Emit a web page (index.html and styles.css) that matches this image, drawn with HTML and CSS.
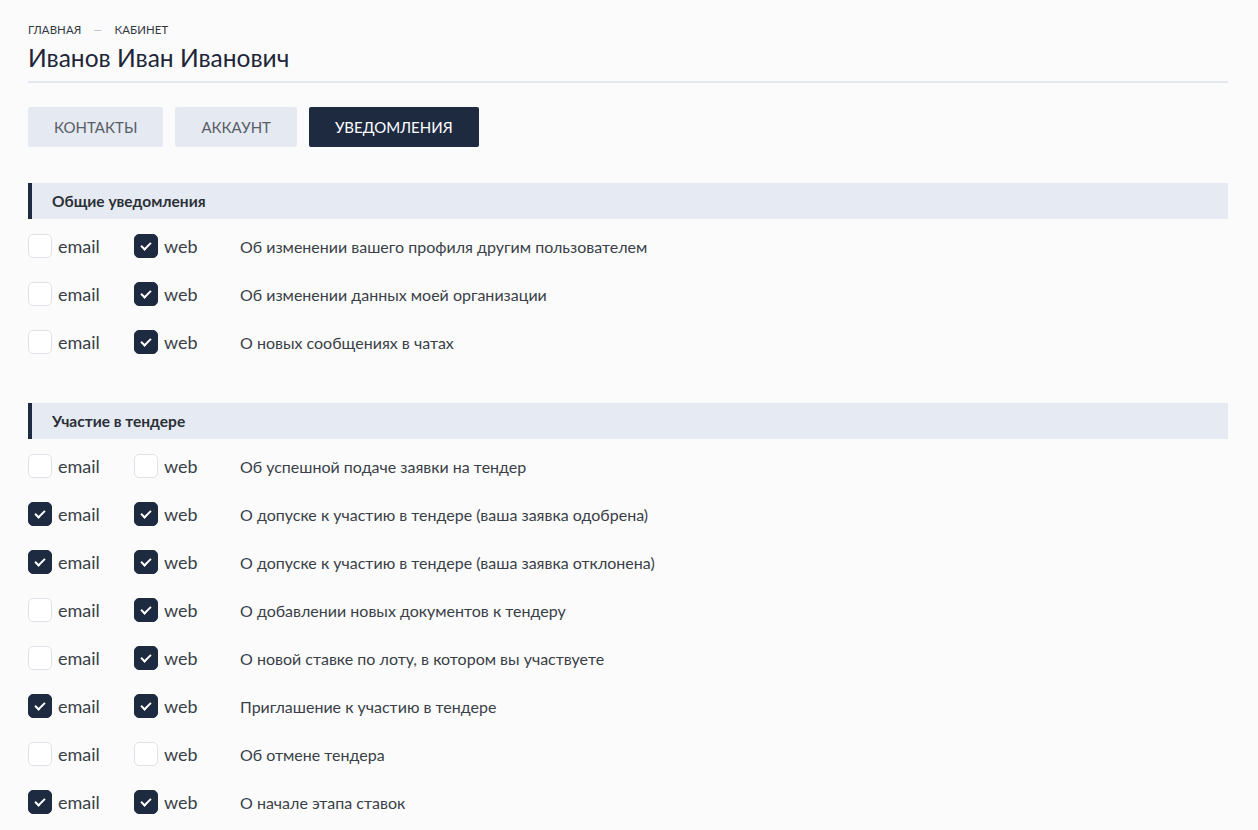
FILE: index.html
```html
<!DOCTYPE html>
<html lang="ru">
<head>
<meta charset="utf-8">
<link rel="stylesheet" href="styles.css">
</head>
<body>
<div class="page">
  <div class="crumbs"><span>Главная</span><span class="dash">—</span><span>Кабинет</span></div>
  <h1 class="title">Иванов Иван Иванович</h1>
  <div class="tabs">
    <div class="tab">Контакты</div>
    <div class="tab">Аккаунт</div>
    <div class="tab active">Уведомления</div>
  </div>

  <section class="group">
    <div class="group-head">Общие уведомления</div>
    <div class="row"><label class="opt"><span class="cb"></span>email</label><label class="opt"><span class="cb on"></span>web</label><span class="desc">Об изменении вашего профиля другим пользователем</span></div>
    <div class="row"><label class="opt"><span class="cb"></span>email</label><label class="opt"><span class="cb on"></span>web</label><span class="desc">Об изменении данных моей организации</span></div>
    <div class="row"><label class="opt"><span class="cb"></span>email</label><label class="opt"><span class="cb on"></span>web</label><span class="desc">О новых сообщениях в чатах</span></div>
  </section>

  <section class="group">
    <div class="group-head">Участие в тендере</div>
    <div class="row"><label class="opt"><span class="cb"></span>email</label><label class="opt"><span class="cb"></span>web</label><span class="desc">Об успешной подаче заявки на тендер</span></div>
    <div class="row"><label class="opt"><span class="cb on"></span>email</label><label class="opt"><span class="cb on"></span>web</label><span class="desc">О допуске к участию в тендере (ваша заявка одобрена)</span></div>
    <div class="row"><label class="opt"><span class="cb on"></span>email</label><label class="opt"><span class="cb on"></span>web</label><span class="desc">О допуске к участию в тендере (ваша заявка отклонена)</span></div>
    <div class="row"><label class="opt"><span class="cb"></span>email</label><label class="opt"><span class="cb on"></span>web</label><span class="desc">О добавлении новых документов к тендеру</span></div>
    <div class="row"><label class="opt"><span class="cb"></span>email</label><label class="opt"><span class="cb on"></span>web</label><span class="desc">О новой ставке по лоту, в котором вы участвуете</span></div>
    <div class="row"><label class="opt"><span class="cb on"></span>email</label><label class="opt"><span class="cb on"></span>web</label><span class="desc">Приглашение к участию в тендере</span></div>
    <div class="row"><label class="opt"><span class="cb"></span>email</label><label class="opt"><span class="cb"></span>web</label><span class="desc">Об отмене тендера</span></div>
    <div class="row"><label class="opt"><span class="cb on"></span>email</label><label class="opt"><span class="cb on"></span>web</label><span class="desc">О начале этапа ставок</span></div>
  </section>
</div>
</body>
</html>
```
FILE: styles.css
```css
html, body {
  margin: 0;
  padding: 0;
  background: #fbfbfc;
}
body {
  font-family: "Lato", "Open Sans", sans-serif;
  color: #2b2f36;
  overflow: hidden;
}
.page {
  width: 1200px;
  padding: 22px 28px 0 28px;
}
.crumbs {
  display: flex;
  gap: 12px;
  font-size: 11.4px;
  text-transform: uppercase;
  color: #333840;
  line-height: 16px;
  letter-spacing: 0.1px;
}
.crumbs .dash {
  color: #b7bcc6;
}
.title {
  margin: 5px 0 0 0;
  font-size: 24.5px;
  font-weight: 400;
  line-height: 30px;
  color: #1d2638;
  padding-bottom: 8px;
  border-bottom: 2px solid #e4e8f0;
}
.tabs {
  display: flex;
  gap: 12px;
  margin-top: 24px;
}
.tab {
  height: 40px;
  display: flex;
  align-items: center;
  padding: 0 26px;
  background: #e5e9f1;
  color: #585d66;
  font-size: 15px;
  text-transform: uppercase;
  border-radius: 2px;
}
.tab.active {
  background: #1e2a40;
  color: #ffffff;
}
.group {
  margin-top: 36px;
}
.group + .group {
  margin-top: 37px;
}
.group-head {
  height: 36px;
  display: flex;
  align-items: center;
  background: #e6eaf2;
  border-left: 4px solid #1e2a40;
  padding-left: 20px;
  font-size: 15.5px;
  font-weight: 700;
  color: #2b2f36;
  margin-bottom: 3px;
}
.row {
  height: 48px;
  display: flex;
  align-items: center;
}
.opt {
  display: flex;
  align-items: center;
  gap: 6px;
  width: 106px;
  font-size: 18px;
  color: #3a3f47;
}
.cb {
  box-sizing: border-box;
  width: 24px;
  height: 24px;
  border: 1px solid #dfe2e8;
  border-radius: 5px;
  background: #ffffff;
  position: relative;
  flex: none;
}
.cb.on {
  background: #1e2a40;
  border-color: #1e2a40;
}
.cb.on::after {
  content: "";
  position: absolute;
  left: 8px;
  top: 5px;
  width: 4px;
  height: 8px;
  border-right: 2px solid #fff;
  border-bottom: 2px solid #fff;
  transform: rotate(45deg);
}
.desc {
  color: #3a3f47;
  font-size: 16px;
}
```
